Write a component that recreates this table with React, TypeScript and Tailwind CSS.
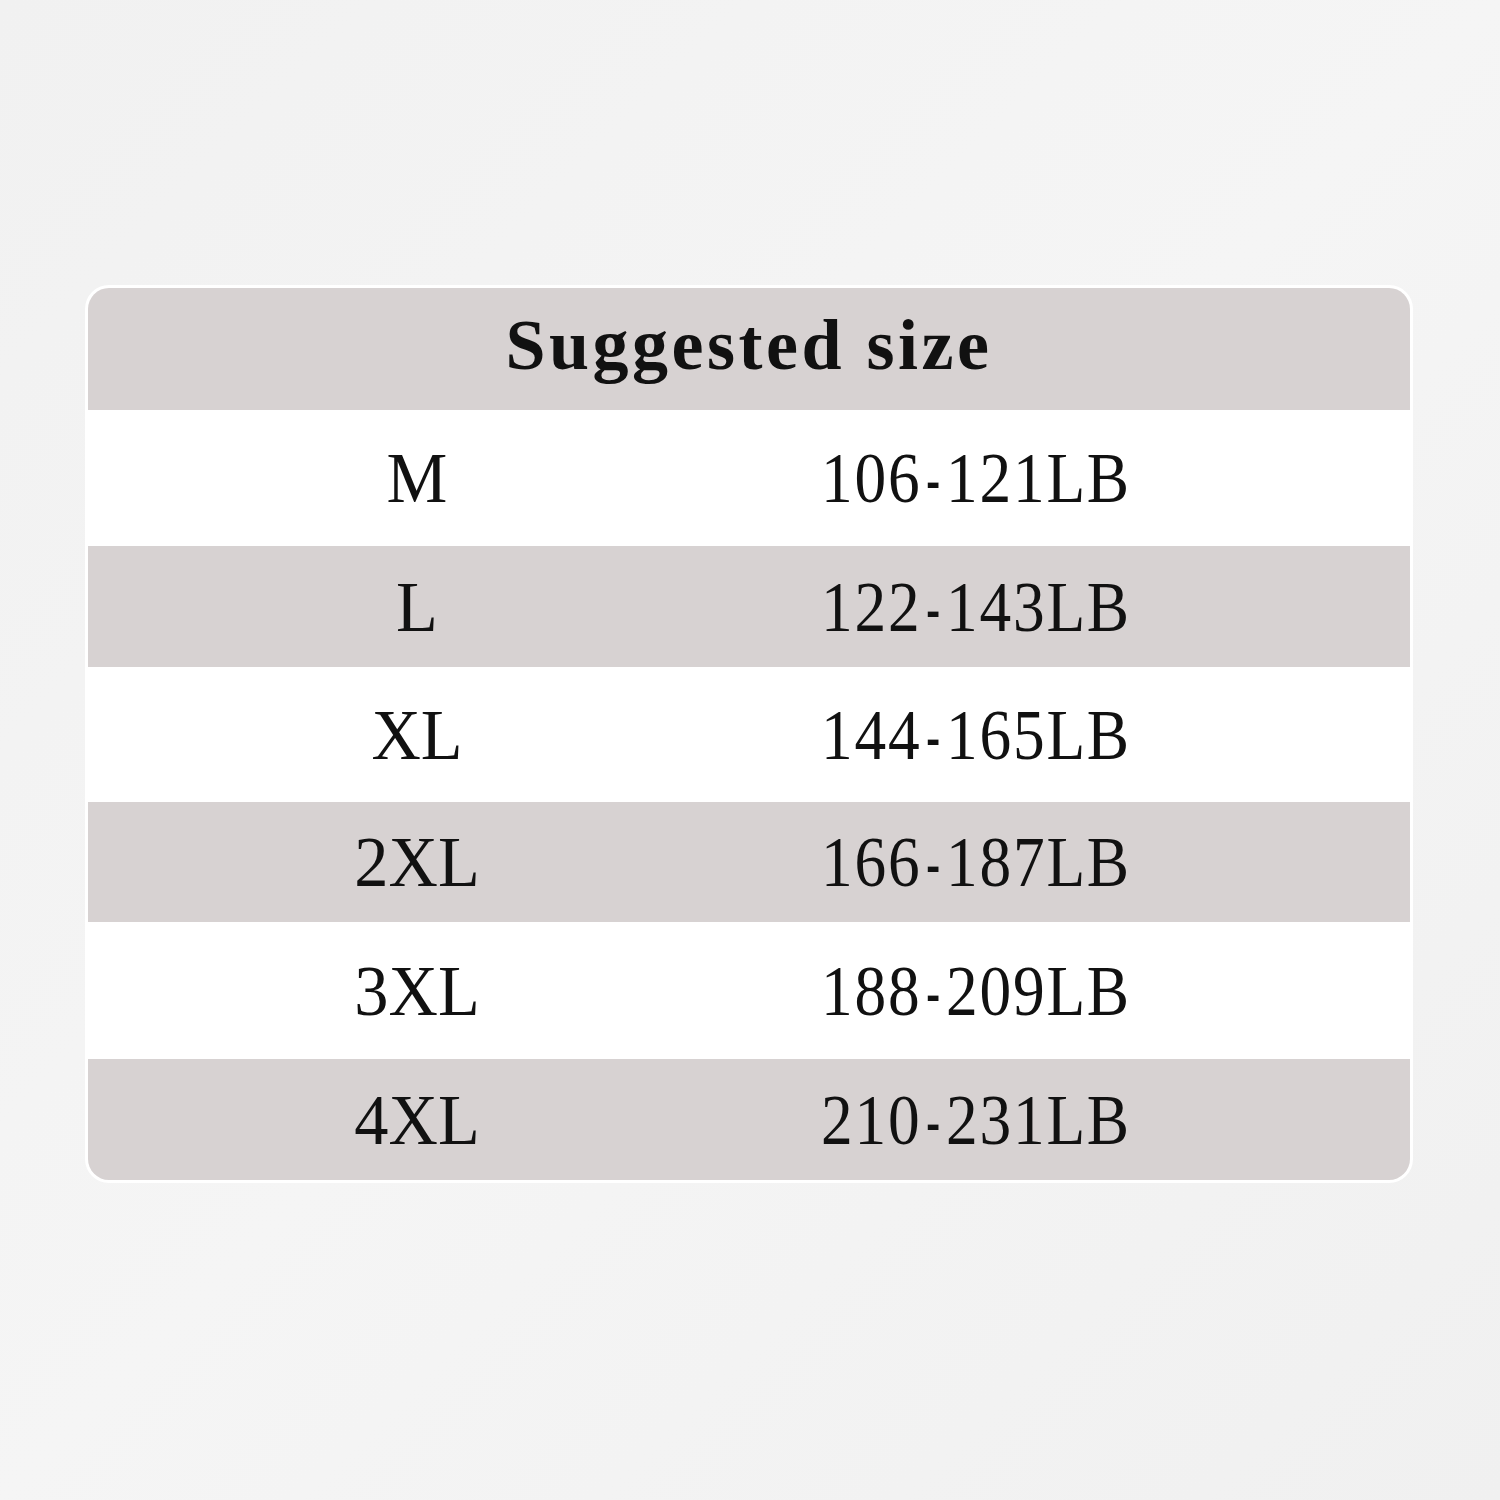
import React from "react";

const rows = [
  { size: "M", from: "106", to: "121LB", h: "h-[136px]", gray: false },
  { size: "L", from: "122", to: "143LB", h: "h-[121px]", gray: true },
  { size: "XL", from: "144", to: "165LB", h: "h-[135px]", gray: false },
  { size: "2XL", from: "166", to: "187LB", h: "h-[120px]", gray: true },
  { size: "3XL", from: "188", to: "209LB", h: "h-[137px]", gray: false },
  { size: "4XL", from: "210", to: "231LB", h: "h-[121px]", gray: true },
];

export default function App() {
  return (
    <div className="w-[1500px] h-[1500px] bg-gradient-to-br from-[#f1f1f1] via-[#f5f5f5] to-[#f0f0f0] pt-[285px] pl-[85px] font-['Liberation_Serif',serif] text-[#111]">
      <div className="w-[1328px] rounded-[24px] bg-white p-[3px]">
        <div className="rounded-[21px] overflow-hidden">
          {/* Header */}
          <div className="h-[122px] bg-[#d7d2d2] flex items-center justify-center pb-[8px]">
            <h1 className="text-[72px] font-bold tracking-[3.5px] leading-none">
              Suggested size
            </h1>
          </div>

          {rows.map((row) => (
            <div
              key={row.size}
              className={`${row.h} ${row.gray ? "bg-[#d7d2d2]" : "bg-white"} grid grid-cols-[658px_460px] items-center text-[72px] leading-none`}
            >
              <div className="text-center">
                <span className="inline-block scale-x-[0.95]">{row.size}</span>
              </div>
              <div className="text-center">
                <span className="inline-block scale-x-[0.88] tracking-[2px] whitespace-nowrap">
                  {row.from}
                  <span className="inline-block scale-x-[0.65] px-[1px] font-light">-</span>
                  {row.to}
                </span>
              </div>
            </div>
          ))}
        </div>
      </div>
    </div>
  );
}
